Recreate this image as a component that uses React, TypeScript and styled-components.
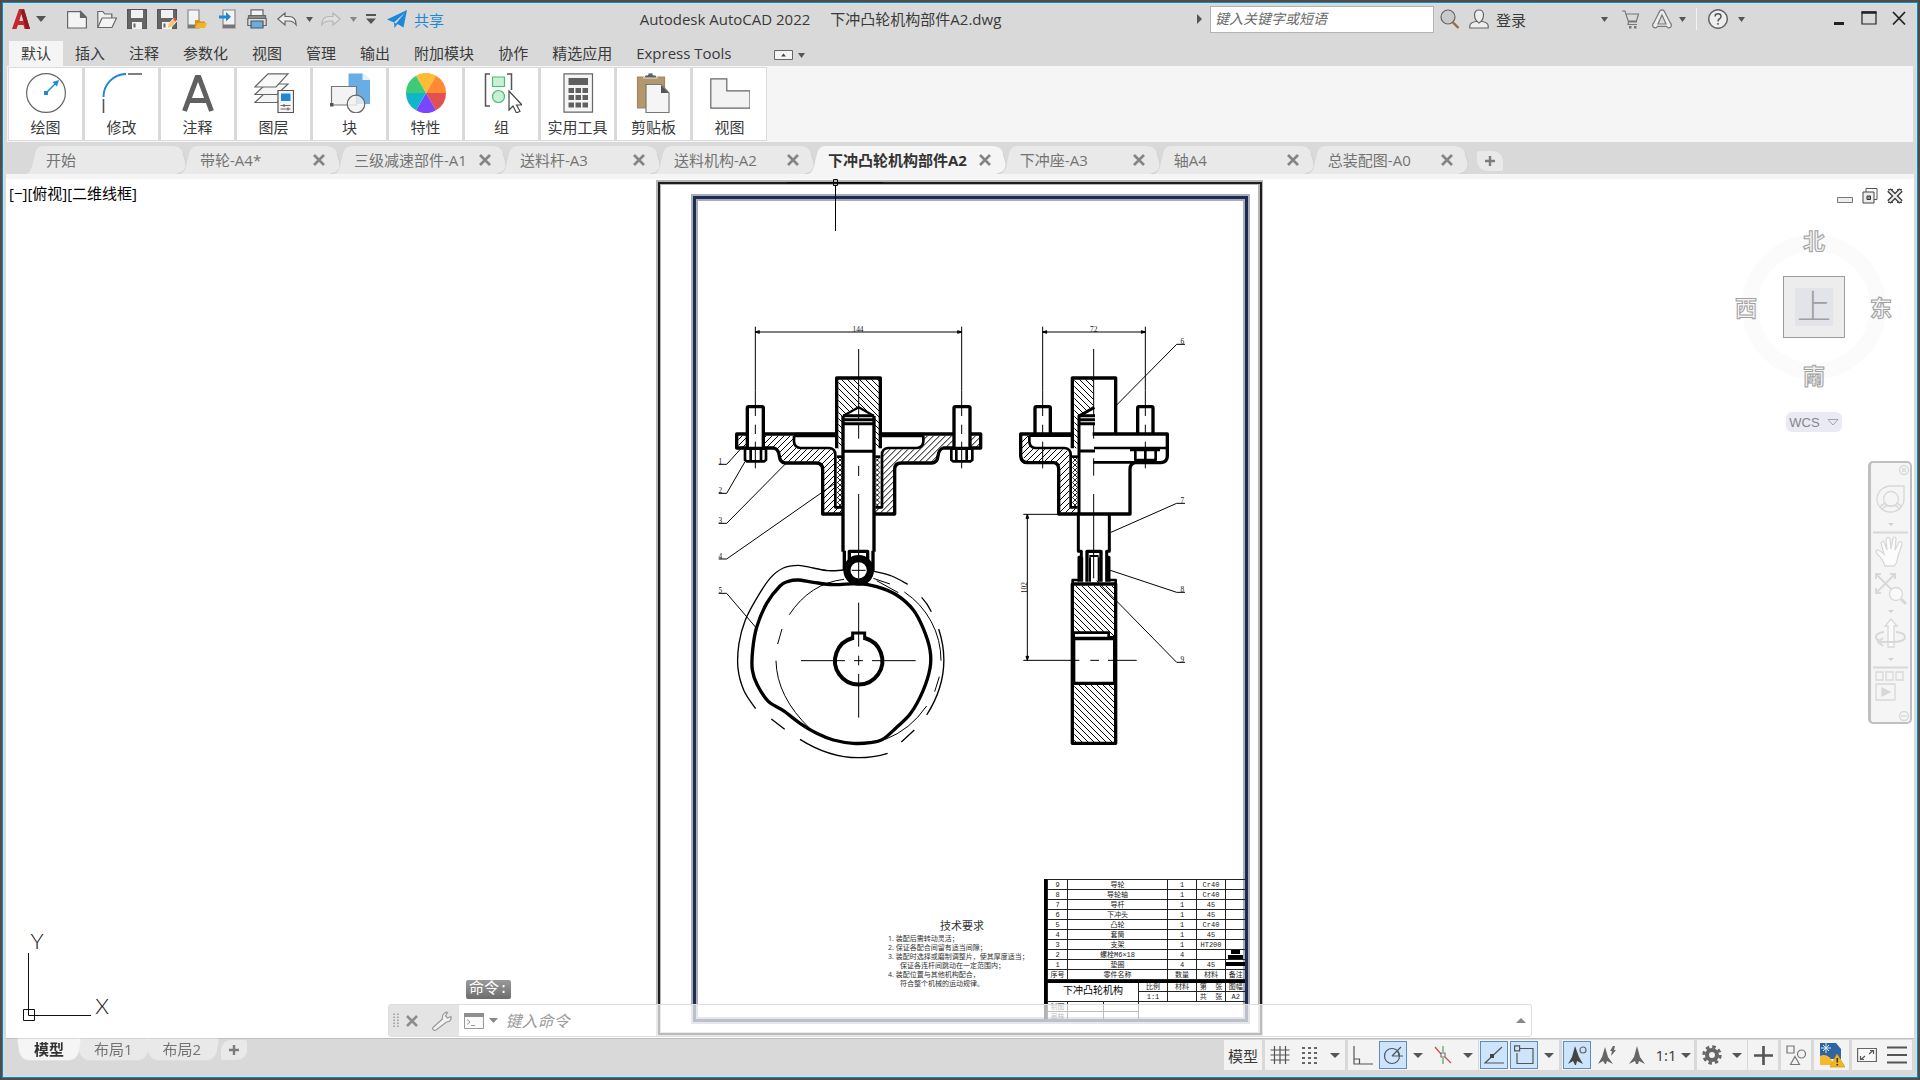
import React from 'react';
import styled, { createGlobalStyle, css } from 'styled-components';

const UI = `'Open Sans', 'Noto Sans CJK SC', sans-serif`;
const GREY = '#d9d9d9';
const LIGHT = '#f5f5f5';

const GlobalStyle = createGlobalStyle`
  *, *::before, *::after { box-sizing: border-box; }
  body { margin: 0; background: #4b4b4b; font-family: ${UI}; font-size: 15px; color: #3a3a3a; }
  button { font: inherit; color: inherit; background: none; border: 0; padding: 0; margin: 0; }
  svg { display: block; }
`;

/* ---------- window frame ---------- */
const Frame = styled.div`
  height: 100vh;
  border: 2px solid #4d4d4d;
  padding: 2px;
  background: ${GREY};
  box-shadow: inset 0 0 0 1px #2386ad, inset 0 0 0 2px #bce6f5;
  display: flex;
  flex-direction: column;
  overflow: hidden;
`;

const Row = styled.div<{ $gap?: number }>`
  display: flex;
  align-items: center;
  gap: ${(p) => p.$gap ?? 0}px;
`;

const IconButton = styled.button<{ $w?: number }>`
  display: flex;
  align-items: center;
  justify-content: center;
  width: ${(p) => p.$w ?? 20}px;
  height: 24px;
  flex: none;
`;

/* ---------- title bar ---------- */
const TitleBar = styled.header`
  height: 32px;
  flex: none;
  display: flex;
  align-items: center;
  justify-content: space-between;
  padding: 0 7px 2px 7px;
`;
const AppMenu = styled.button`
  display: flex;
  align-items: center;
  gap: 5px;
  margin-right: 21px;
`;
const Share = styled.button`
  display: flex;
  align-items: center;
  gap: 7px;
  color: #1e88d8;
  white-space: nowrap;
`;
const Title = styled.h1`
  margin: 0;
  font-size: 15px;
  font-weight: 400;
  line-height: 20px;
  display: flex;
  gap: 20px;
  white-space: nowrap;
`;
const Search = styled.input`
  width: 224px;
  height: 27px;
  margin: 0 6px 0 8px;
  border: 1px solid #b3b3b3;
  background: #fff;
  padding: 0 4px 2px;
  font: italic 14px ${UI};
  color: #555;
  &::placeholder { color: #6a6a6a; opacity: 1; }
`;
const SignIn = styled.button`
  display: flex;
  align-items: center;
  gap: 7px;
  margin: 0 75px 0 9px;
  white-space: nowrap;
`;
const Divider = styled.span`
  width: 1px;
  height: 22px;
  margin: 0 11px 0 10px;
  background: #f4f4f4;
`;
const WindowButtons = styled(Row)`
  margin-left: 84px;
`;

/* ---------- ribbon ---------- */
const RibbonTabs = styled.nav`
  height: 30px;
  flex: none;
  display: flex;
  align-items: flex-end;
  padding-left: 5px;
`;
const RibbonTab = styled.button<{ $active?: boolean }>`
  height: 25px;
  padding: 0 12px 2px;
  white-space: nowrap;
  line-height: 20px;
  background: ${(p) => (p.$active ? LIGHT : 'transparent')};
`;
const RibbonToggle = styled.button`
  display: flex;
  align-items: center;
  gap: 5px;
  height: 22px;
  margin-left: 30px;
`;
const Ribbon = styled.section`
  flex: none;
  height: 76px;
  margin: 0 3px;
  padding: 2px;
  background: ${LIGHT};
  display: flex;
`;
const Panels = styled.div`
  display: flex;
  gap: 3px;
  background: #d9d9d9;
  box-shadow: 0 0 0 1px #dcdcdc;
`;
const Panel = styled.button`
  width: 73px;
  height: 72px;
  background: #fff;
  display: flex;
  flex-direction: column;
  align-items: center;
  padding-top: 5px;
  gap: 4px;
  line-height: 20px;
  white-space: nowrap;
`;

/* ---------- drawing file tabs ---------- */
const FileTabs = styled.nav`
  flex: none;
  height: 32px;
  display: flex;
  align-items: flex-end;
  padding-left: 28px;
`;
const FileTabBox = styled.div<{ $active?: boolean }>`
  position: relative;
  z-index: ${(p) => (p.$active ? 1 : 0)};
  height: 28px;
  min-width: 154px;
  padding: 0 15px 0 14px;
  display: flex;
  align-items: center;
  justify-content: space-between;
  gap: 12px;
  color: ${(p) => (p.$active ? '#333' : '#737373')};
  fill: ${(p) => (p.$active ? LIGHT : '#e9e9e9')};
  font-weight: ${(p) => (p.$active ? 700 : 400)};
  white-space: nowrap;
  &::before {
    content: '';
    position: absolute;
    inset: 0 14px 0 14px;
    background: ${(p) => (p.$active ? LIGHT : '#e9e9e9')};
  }
  > button { position: relative; line-height: 20px; }
`;
const TabEdge = styled.svg<{ $side: 'left' | 'right' }>`
  position: absolute;
  top: 0;
  ${(p) => (p.$side === 'left' ? css`left: -6px;` : css`right: -1px;`)}
`;
const Strip = styled.div`
  flex: none;
  height: 5px;
  margin: 0 2px;
  background: ${LIGHT};
`;
const AddTab = styled.button<{ $flip?: boolean }>`
  width: 26px;
  height: 20px;
  display: flex;
  align-items: center;
  justify-content: center;
  background: #e9e9e9;
  border-radius: ${(p) => (p.$flip ? '10px 2px 10px 2px' : '2px 10px 2px 10px')};
  margin: ${(p) => (p.$flip ? '1px 0 0 5px' : '0 0 3px 9px')};
`;

/* ---------- canvas ---------- */
const Canvas = styled.main`
  flex: 1;
  min-height: 0;
  position: relative;
  margin: 0 2px;
  background: #fff;
  display: flex;
  justify-content: center;
  overflow: hidden;
`;
const ViewLabel = styled.div`
  position: absolute;
  left: 3px;
  top: 4px;
  color: #000;
  font-size: 15px;
  line-height: 20px;
`;
const Sheet = styled.div`
  position: relative;
  width: 610px;
  height: 859px;
  flex: none;
`;
const TitleBlock = styled.div`
  position: absolute;
  left: 389px;
  top: 700px;
  width: 201px;
  height: 140px;
  overflow: hidden;
  border-left: 3px solid #000;
  color: #222;
`;
const Grid = styled.table<{ $heavy?: boolean }>`
  width: 198px;
  table-layout: fixed;
  border-collapse: collapse;
  font-family: 'Liberation Mono', 'Noto Sans CJK SC', monospace;
  font-size: 7px;
  line-height: 8px;
  text-align: center;
  border-top: ${(p) => (p.$heavy ? 3 : 1)}px solid #000;
  tr { height: 10px; }
  td, th {
    padding: 0;
    font-weight: 400;
    border: 1px solid #222;
    white-space: pre;
    overflow: hidden;
  }
  td:last-child, th:last-child { border-right: 0; }
`;
const PartName = styled.td`
  font-size: 10px;
  line-height: 12px;
  color: #000;
`;
const Notes = styled.div`
  position: absolute;
  left: 233px;
  top: 739px;
  font-size: 7px;
  line-height: 9px;
  color: #333;
  white-space: nowrap;
  h2 { margin: 0 0 1px 52px; font-size: 11px; line-height: 15px; font-weight: 400; }
  p { margin: 0; }
`;
const NoteLine = styled.p<{ $indent?: boolean }>`
  && { padding-left: ${(p) => (p.$indent ? 12 : 0)}px; }
`;
const DocButtons = styled.div`
  position: absolute;
  right: 11px;
  top: 9px;
  display: flex;
  gap: 9px;
`;
const Compass = styled.div`
  position: absolute;
  right: 28px;
  top: 56px;
  width: 144px;
  height: 144px;
  border-radius: 50%;
  border: 16px solid #fbfbfb;
  display: flex;
  align-items: center;
  justify-content: center;
`;
const Cube = styled.button`
  width: 62px;
  height: 62px;
  flex: none;
  background: #ededed;
  border: 1px solid #9b9b9b;
  display: flex;
  align-items: center;
  justify-content: center;
  span {
    width: 38px;
    height: 38px;
    background: #e2e4e9;
    color: #9d9fa3;
    font-size: 34px;
    font-weight: 300;
    line-height: 36px;
  }
`;
const Heading = styled.span<{ $x: number; $y: number }>`
  position: absolute;
  left: ${(p) => p.$x}px;
  top: ${(p) => p.$y}px;
  width: 24px;
  text-align: center;
  font-size: 22px;
  line-height: 24px;
  color: #f4f4f4;
  font-weight: 700;
  -webkit-text-stroke: 1px #a0a0a0;
`;
const Wcs = styled.button`
  position: absolute;
  right: 72px;
  top: 233px;
  width: 56px;
  height: 20px;
  border-radius: 6px;
  background: #e9eaf4;
  color: #85868c;
  font: 13px 'Liberation Sans', sans-serif;
  display: flex;
  align-items: center;
  justify-content: center;
  gap: 7px;
`;
const NavBar = styled.aside`
  position: absolute;
  right: 2px;
  top: 282px;
  width: 44px;
  height: 263px;
  border: 2px solid #c0c0c0;
  border-left-width: 3px;
  border-radius: 5px;
  background: ${LIGHT};
`;
const Ucs = styled.svg`
  position: absolute;
  left: 14px;
  bottom: 14px;
  font-family: Lato, sans-serif;
  font-weight: 300;
`;
const Prompt = styled.div`
  position: absolute;
  left: 460px;
  bottom: 39px;
  height: 19px;
  padding: 0 3px;
  border-radius: 2px;
  background: linear-gradient(#9a9a9a, #6d6d6d);
  color: #fff;
  font: 15px 'Liberation Mono', 'Noto Sans CJK SC', monospace;
  line-height: 19px;
`;
const CommandLine = styled.div`
  position: absolute;
  left: 20%;
  right: 20%;
  bottom: 1px;
  height: 33px;
  border: 1px solid #dedede;
  border-radius: 3px;
  background: rgba(255, 255, 255, 0.7);
  display: flex;
  align-items: center;
`;
const CommandTools = styled.div`
  width: 70px;
  height: 31px;
  flex: none;
  background: #e4e4e4;
  display: flex;
  align-items: center;
  gap: 7px;
  padding-left: 4px;
`;
const CommandInput = styled.input`
  flex: 1;
  min-width: 0;
  margin-left: 6px;
  border: 0;
  background: transparent;
  font: italic 16px ${UI};
  &::placeholder { color: #9c9c9c; opacity: 1; }
`;

/* ---------- status bar ---------- */
const StatusBar = styled.footer`
  flex: none;
  height: 38px;
  margin: 0 2px;
  border-top: 1px solid #bdbdbd;
  display: flex;
  justify-content: space-between;
  align-items: flex-start;
`;
const LayoutTabs = styled.nav`
  display: flex;
  padding-left: 13px;
`;
const LayoutTab = styled.button<{ $active?: boolean }>`
  position: relative;
  isolation: isolate;
  z-index: ${(p) => (p.$active ? 1 : 0)};
  height: 22px;
  padding: 0 15px 2px;
  line-height: 20px;
  color: ${(p) => (p.$active ? '#333' : '#737373')};
  font-weight: ${(p) => (p.$active ? 700 : 400)};
  &::before {
    content: '';
    position: absolute;
    z-index: -1;
    inset: 0;
    background: ${(p) => (p.$active ? LIGHT : '#e9e9e9')};
    border-radius: 2px 2px 9px 9px;
    transform: perspective(20px) rotateX(-6deg);
  }
`;
const StatusTools = styled.div`
  display: flex;
  padding: 1px 2px 0 0;
`;
const Group = styled.div<{ $joined?: boolean }>`
  height: 30px;
  margin-left: ${(p) => (p.$joined ? 1 : 3)}px;
  background: #f3f3f3;
  display: flex;
  align-items: center;
`;
const Tool = styled.button<{ $w?: number; $on?: boolean }>`
  width: ${(p) => p.$w ?? 30}px;
  height: 30px;
  display: flex;
  align-items: center;
  justify-content: center;
  gap: 4px;
  white-space: nowrap;
  ${(p) =>
    p.$on &&
    css`
      width: 28px;
      height: 28px;
      margin: 0 1px;
      background: #cce5fd;
      border: 1px solid #5f8bb8;
    `}
`;

/* ---------- small glyph helpers ---------- */
const Caret = ({ w = 7, h = 5, c = '#555', up = false }: { w?: number; h?: number; c?: string; up?: boolean }) => (
  <svg width={w} height={h} viewBox="0 0 8 6" preserveAspectRatio="none">
    <path d={up ? 'M0 6h8L4 0z' : 'M0 0h8L4 6z'} fill={c} />
  </svg>
);
const Cross = ({ s = 12, w = 2.6, c = '#848484' }: { s?: number; w?: number; c?: string }) => (
  <svg width={s} height={s} viewBox="0 0 12 12">
    <path d="M1 1l10 10M11 1L1 11" stroke={c} strokeWidth={w} fill="none" />
  </svg>
);
const PlusMark = ({ s = 10, w = 2.4, c = '#7c7c7c' }: { s?: number; w?: number; c?: string }) => (
  <svg width={s} height={s} viewBox="0 0 10 10">
    <path d="M5 0v10M0 5h10" stroke={c} strokeWidth={w} />
  </svg>
);
const Glyph = ({ s = 20, children }: { s?: number; children: React.ReactNode }) => (
  <svg width={s} height={s} viewBox={`0 0 ${s} ${s}`} fill="none" stroke="#666" strokeWidth="1.2">
    {children}
  </svg>
);

const floppy = (
  <>
    <path d="M.5.5h19v19h-19z" fill="#666" stroke="#555" />
    <path d="M4 1h12v8H4z" fill="#f2f2f2" stroke="none" />
    <path d="M5 13h10v7H5z" fill="#f2f2f2" stroke="none" />
    <path d="M6.500 14.500h2v4h-2z" fill="#666" stroke="none" />
  </>
);

const quick: { label: string; art: React.ReactNode }[] = [
  { label: '新建', art: <><path d="M.6 2.600h13l5.800 5.800v10.600H.6z" fill="#f4f4f4" /><path d="M13.500 2.500v6h6z" fill="#666" /></> },
  { label: '打开', art: <><path d="M.8 18V2.500h5l2 2.500h7v4" fill="#f0f0f0" /><path d="M.8 18.500L5 9h14.500L15 18.500z" fill="#f4f4f4" /></> },
  { label: '保存', art: floppy },
  { label: '另存为', art: <>{floppy}<path d="M10 19.500l1-4 6-6.500 3 3-6 6.500z" fill="#f6c66b" stroke="#fff" strokeWidth=".8" /><path d="M16 10l2-1.500L20 11l-1.500 1.500z" fill="#e34b4b" stroke="none" /></> },
  { label: '从云端打开', art: <><path d="M1 1h11v18H1z" fill="#f3f3f3" stroke="#888" /><path d="M1 15.500h11V19H1z" fill="#777" stroke="none" /><path d="M8 19v-8h4l1.500 1.500H18V19z" fill="#d99412" stroke="none" /><path d="M8 19l2.500-5H20l-2 5z" fill="#f4b12c" stroke="none" /></> },
  { label: '保存到云端', art: <><path d="M6 1h12v18H6z" fill="#f3f3f3" stroke="#888" /><path d="M6 15.500h12V19H6z" fill="#777" stroke="none" /><path d="M2 6.500h7V3l5 4.800-5 4.700V9.500H2z" fill="#1e88d8" stroke="none" /></> },
  { label: '打印', art: <><path d="M4 .8h12V8H4z" fill="#f3f3f3" /><path d="M1.500 6.500h17V14h-17z" fill="#8a8a8a" /><path d="M.8 9.500h18.400v7H.8z" fill="#ddd" /><path d="M4 12h12v7H4z" fill="#66aee2" stroke="#555" /></> },
];

/* ---------- ribbon artwork ---------- */
const pie = ['#ffbb33', '#ff8a33', '#e35050', '#7a45ff', '#10b5c9', '#3ecb78'];
const slice = (i: number) => {
  const a = ((i * 60 - 120) * Math.PI) / 180;
  const b = ((i * 60 - 60) * Math.PI) / 180;
  const p = (t: number) => `${20 + 20 * Math.cos(t)} ${20 + 20 * Math.sin(t)}`;
  return `M20 20L${p(a)}A20 20 0 0 1 ${p(b)}z`;
};

const panels: { label: string; art: React.ReactNode }[] = [
  { label: '绘图', art: <><circle cx="20" cy="20" r="19.400" stroke="#666" /><path d="M20 20l11-11" stroke="#1e88d8" strokeWidth="1.500" /><path d="M33 7l-2 6.500L26.500 9z" fill="#1e88d8" stroke="none" /><path d="M18 18h4v4h-4z" fill="#1e88d8" stroke="none" /></> },
  { label: '修改', art: <><path d="M1.500 24A23 23 0 0 1 24 .900" stroke="#1e88d8" strokeWidth="2" /><path d="M1.500 26v14M26 1h14" stroke="#555" strokeWidth="1.600" /></> },
  { label: '注释', art: <path d="M6.500 38L19 4.500h2L33.500 38M11.500 27.500h17" stroke="#606060" strokeWidth="5" /> },
  { label: '图层', art: <><path d="M.8 29.500L12 19h22L23 29.500z" fill="#f6f6f6" /><path d="M.8 21.500L12 11h22L23 21.500z" fill="#f6f6f6" /><path d="M.8 14L14 .800h20L22 14z" fill="#f8f8f8" /><path d="M24 17.500h15.500v22H24z" fill="#f6f6f6" stroke="#555" /><path d="M27 20.500h9.500v7.500H27z" fill="#1e88d8" stroke="none" /><path d="M26.500 32.500h10M26.500 36h10M30 31v3M34 34.500v3" /></> },
  { label: '块', art: <><path d="M18.500.500h14L40 7v24H18.500z" fill="#68aee4" stroke="none" /><path d="M32.500.500V7H40z" fill="#eaf3fb" stroke="none" /><path d="M1.500 13.500h25v18.500h-25z" fill="#f3f3f3" stroke="#777" /><circle cx="26" cy="31" r="8.800" fill="#f3f3f3" fillOpacity=".8" /><path d="M0 30h3.500v3.500H0z" fill="#555" stroke="none" /></> },
  { label: '特性', art: <g stroke="none">{pie.map((c, i) => <path key={c} d={slice(i)} fill={c} />)}</g> },
  { label: '组', art: <><path d="M8 1H3.500v32H8M25 1h4.500v16" stroke="#555" strokeWidth="1.500" /><path d="M10.500 4h12v9.500h-12z" fill="#c8f0d4" stroke="#49bd71" /><circle cx="16.500" cy="23.500" r="6" fill="#c8f0d4" stroke="#49bd71" /><path d="M27 18v19l4-4 3.500 7 3.500-1.800-3.500-6.200H40z" fill="#fff" stroke="#444" /></> },
  { label: '实用工具', art: <><path d="M6 .800h28.500v38.400H6z" fill="#f5f5f5" /><path d="M10.500 5h19.500v7H10.500z" fill="#606060" stroke="none" />{[15, 22, 29.5].map((y) => [10.5, 17.5, 24.5].map((x) => <path key={`${x}-${y}`} d={`M${x} ${y}h5.500v5h-5.500z`} fill="#606060" stroke="none" />))}</> },
  { label: '剪贴板', art: <><path d="M3.500 4h27v31h-27z" fill="#b2986c" stroke="#a08861" /><path d="M9.500 5h14l-2-3h-2.500V0h-5v2H11.500z" fill="#606060" stroke="#fff" strokeWidth=".8" /><path d="M12 11.500h15.500l7.500 8.500v19.500H12z" fill="#f5f5f5" stroke="#777" /><path d="M27 12v8h7.500z" fill="#555" stroke="none" /></> },
  { label: '视图', art: <path d="M.8 5.800h16v12H40v17.400H.8z" fill="#f3f3f3" stroke="#666" /> },
];

/* ---------- engineering drawing ---------- */
type Pt = [number, number];
/** Catmull-Rom spline through the points, written as cubic Béziers. */
const spline = (pts: Pt[], closed = false) => {
  const n = pts.length;
  const at = (i: number): Pt => (closed ? pts[(i + n) % n] : pts[Math.max(0, Math.min(n - 1, i))]);
  let d = `M${pts[0].join(' ')}`;
  for (let i = 0; i < (closed ? n : n - 1); i++) {
    const [a, b, c, e] = [at(i - 1), at(i), at(i + 1), at(i + 2)];
    d += `C${b[0] + (c[0] - a[0]) / 6} ${b[1] + (c[1] - a[1]) / 6} ${c[0] - (e[0] - b[0]) / 6} ${c[1] - (e[1] - b[1]) / 6} ${c[0]} ${c[1]}`;
  }
  return closed ? d + 'z' : d;
};

const camProfile: Pt[] = [[295, 120], [340, 127], [400, 134], [476, 131], [530, 140], [590, 165], [640, 210], [670, 266], [690, 330], [690, 385], [668, 455], [632, 520], [590, 562], [548, 598], [510, 608], [460, 610], [400, 600], [350, 580], [300, 550], [250, 512], [205, 484], [172, 435], [157, 390], [158, 330], [170, 262], [200, 190], [240, 138], [265, 124]];

type Callout = [string, number, number, number];
const leftCallouts: Callout[] = [['1', 463, 130, 408], ['2', 550, 135, 455], ['3', 640, 258, 460], ['4', 747, 405, 520], ['5', 850, 168, 953]];
const rightCallouts: Callout[] = [['6', 103, 410, 285], ['7', 580, 393, 667], ['8', 847, 388, 780], ['9', 1057, 350, 812]];

const Leaders = ({ items, from, to, textX }: { items: Callout[]; from: number; to: number; textX: number }) => (
  <>
    {items.map(([n, y, tx, ty]) => (
      <g key={n}>
        <path d={`M${from} ${y}H${to}L${tx} ${ty}`} strokeWidth="3" />
        <text x={textX} y={y - 1} textAnchor="middle" fill="#111" stroke="none">{n}</text>
      </g>
    ))}
  </>
);

const HalfFlange = ({ hatch }: { hatch: string }) => (
  <>
    <path d="M115 377H280L285 405 300 418H395L403 432V592L428 597V608H372V475L355 455H255L240 440 232 418 115 414z" fill={`url(#${hatch})`} stroke="none" />
    <path d="M410 372H110V414H222Q236 418 238 438T256 459H348Q368 459 368 478V612H428" />
    <path d="M282 375H410" strokeWidth="13" />
    <path d="M282 378V395Q284 414 302 414H388Q406 416 406 434V592H426" strokeWidth="8" />
    <path d="M142 415V294Q142 290 146 290H186Q190 290 190 294V415z" fill="#fff" />
    <path d="M135 416H198V450L192 454H141L135 450zM152 420V450M183 420V450" fill="#fff" strokeWidth="8" />
    <path d="M411 440H426V590H411z" fill="url(#crosshatch)" stroke="none" />
    <path d="M411 440H426" strokeWidth="8" />
  </>
);

const SheetArt = () => (
  <svg width="610" height="859" viewBox="655 179 610 859" fill="none" stroke="#000">
    <defs>
      <pattern id="hatchA" width="18" height="18" patternUnits="userSpaceOnUse">
        <path d="M-2 2l4-4M0 18L18 0M16 20l4-4" stroke="#000" strokeWidth="3" />
      </pattern>
      <pattern id="hatchB" width="18" height="18" patternUnits="userSpaceOnUse">
        <path d="M-2 16l4 4M0 0l18 18M16-2l4 4" stroke="#000" strokeWidth="3" />
      </pattern>
      <pattern id="crosshatch" width="15" height="15" patternUnits="userSpaceOnUse">
        <path d="M0 0l15 15M15 0L0 15" stroke="#000" strokeWidth="2.600" />
      </pattern>
    </defs>

    {/* paper edge and border */}
    <path d="M658.500 182.500h602v852h-602z" stroke="#b5b5b5" strokeWidth="5" />
    <path d="M659 183h602v851h-602z" stroke="#1c1c1c" strokeWidth="2" />
    <path d="M694.500 197.500h552v823h-552z" stroke="#a8adb9" strokeWidth="7" />
    <path d="M694.500 197.500h552v823h-552z" stroke="#1d2c50" strokeWidth="3" />

    {/* cursor */}
    <path d="M787 182.500h96M835.500 186v45" />
    <path d="M833.500 179.500h4v6h-4z" />

    {/* front view */}
    <g transform="translate(700 310) scale(.3333333)" strokeWidth="10" strokeLinejoin="round" fontSize="22" fontFamily="Liberation Serif, serif">
      <g strokeWidth="3" fill="#222">
        <path d="M166 50V242M785 50V242M166 66H785" />
        <path d="M166 66l12-4v8zM785 66l-12-4v8z" />
      </g>
      <HalfFlange hatch="hatchA" />
      <g transform="translate(952 0) scale(-1 1)"><HalfFlange hatch="hatchB" /></g>
      <path d="M410 415V204H541V415" fill="#fff" />
      <path d="M415 208H537V415H525V325L476 292 428 320V415H415z" fill="url(#hatchB)" stroke="none" />
      <path d="M430 725V318L476 292 522 318V725z" fill="#fff" stroke="none" />
      <path d="M429 725V318M522 318V725" />
      <path d="M429 318L476 292 522 318" strokeWidth="7" />
      <path d="M429 317H522M429 329H522M429 341H522M429 424H522" strokeWidth="9" />
      <path d="M433 722V782M519 722V782M448 760V724H503V760" />
      <circle cx="476" cy="781" r="41" strokeWidth="10" />
      <circle cx="476" cy="781" r="31" strokeWidth="13" fill="#fff" />
      <path d="M476 117V330M476 345V386M476 468V498M476 552V805M455 781H497M166 242V318M166 344V372M166 395V475M785 242V318M785 344V372M785 395V475" strokeWidth="3" />
      <text x="474" y="65" textAnchor="middle" fill="#111" stroke="none">144</text>
      <Leaders items={leftCallouts} from={56} to={80} textX={61} />
    </g>

    {/* cam */}
    <g transform="translate(700 540) scale(.3333333)" strokeWidth="3">
      <path d={spline(camProfile, true)} strokeWidth="10" />
      <path d={spline([[167, 506], [132, 452], [114, 385], [117, 310], [136, 240], [170, 175], [210, 115], [250, 84], [295, 76], [340, 84], [385, 92], [432, 90]])} strokeWidth="4" />
      <path d={spline([[522, 94], [575, 108], [623, 133]])} strokeWidth="4" />
      <path d="M665 172Q682 190 694 215M716 267Q760 400 680 525M643 570L604 606M563 640Q430 680 300 598M254 568L214 537" strokeWidth="4" />
      <path d="M613 156A247 247 0 0 1 723 362M718 410L704 455M680 498Q630 570 556 598M228 362Q230 470 330 566M246 267L233 312M268 224Q330 130 432 118M520 115L570 132M530 122L595 158" />
      <path d="M458 294A71 71 0 1 0 494 294" strokeWidth="12" />
      <path d="M458 300V279H494V300" strokeWidth="9" />
      <path d="M476 188V320M476 347V376M476 402V533M303 362H435M462 362H489M516 362H647" />
    </g>

    {/* side view */}
    <g transform="translate(980 310) scale(.3333333)" strokeWidth="10" strokeLinejoin="round" fontSize="22" fontFamily="Liberation Serif, serif">
      <g strokeWidth="3">
        <path d="M188 50V242M496 50V242M188 66H496M142 613V1051M130 613H236" />
        <path d="M188 66l12-4v8zM496 66l-12-4v8zM142 613l-4 12h8zM142 1051l-4-12h8z" fill="#000" />
      </g>
      <path d="M165 370V294Q165 290 169 290H207Q211 290 211 294V370M473 370V294Q473 290 477 290H515Q519 290 519 294V370" />
      <path d="M126 377H146V400L163 418H260L268 432V592L293 598V608H240V475L227 455H140L126 438z" fill="url(#hatchA)" stroke="none" />
      <path d="M277 372H122V438Q124 458 142 458H222Q236 460 236 478V612H450V478Q450 460 466 458H543Q562 456 562 438V372H338" />
      <path d="M148 375H277" strokeWidth="12" />
      <path d="M148 378V395Q150 414 166 414H254Q272 416 272 434V592H293" strokeWidth="8" />
      <path d="M342 414H562M340 457H466" strokeWidth="8" />
      <path d="M466 424V450H527V424M496 422V452M450 420H540" strokeWidth="8" />
      <path d="M277 415V204H407V370" />
      <path d="M283 208H341V292L297 315V415H283z" fill="url(#hatchB)" stroke="none" />
      <path d="M297 612V318L343 292M297 317H345M297 329H345M297 341H345M297 423H345" strokeWidth="9" />
      <path d="M277 440H293V590H277z" fill="url(#crosshatch)" stroke="none" />
      <path d="M275 440H295" strokeWidth="8" />
      <path d="M295 612V724H304V742H297V815M388 612V724H380V742H387V815M305 742V815M380 742V815" strokeWidth="9" />
      <path d="M321 815V724H363V815" />
      <path d="M328 738H356M330 815V742M356 815V742" strokeWidth="6" />
      <path d="M278 822V810H297M388 810H407V822" strokeWidth="8" />
      <path d="M277 822H407V1300H277z" />
      <path d="M283 828H403V980H388V966H283z" fill="url(#hatchB)" stroke="none" />
      <path d="M281 968H386V984H281zM386 982H403" fill="#fff" strokeWidth="8" />
      <path d="M281 986H404V1120H281z" fill="#fff" />
      <path d="M283 1125H403V1296H283z" fill="url(#hatchB)" stroke="none" />
      <path d="M341 117V318M341 344V386M341 445V497M341 552V805M188 290V318M188 344V372M188 395V475M496 242V318M496 344V372M496 395V475M188 242V290M130 1051H298M331 1051H357M384 1051H470" strokeWidth="3" />
      <g fill="#111" stroke="none">
        <text x="341" y="65" textAnchor="middle">72</text>
        <text transform="translate(140 833) rotate(-90)" textAnchor="middle">102</text>
      </g>
      <Leaders items={rightCallouts} from={615} to={590} textX={607} />
    </g>

    {/* projection marks in the remarks column */}
    <path d="M1231 950h9v4h-9zM1228 955h15v4h-15zM1225 962h20v4h-20z" fill="#000" stroke="none" />
  </svg>
);

const parts: [string, string, string, string][] = [
  ['9', '导轮', '1', 'Cr40'],
  ['8', '导轮轴', '1', 'Cr40'],
  ['7', '导杆', '1', '45'],
  ['6', '下冲头', '1', '45'],
  ['5', '凸轮', '1', 'Cr40'],
  ['4', '套筒', '1', '45'],
  ['3', '支架', '1', 'HT200'],
  ['2', '螺栓M6×18', '4', ''],
  ['1', '垫圈', '4', '45'],
];

const Cols = ({ w }: { w: number[] }) => (
  <colgroup>{w.map((v, i) => <col key={i} width={v} />)}</colgroup>
);

const Bill = () => (
  <TitleBlock>
    <Grid>
      <Cols w={[20, 100, 29, 29, 20]} />
      <tbody>
        {parts.map((r) => (
          <tr key={r[0]}>{r.map((c, i) => <td key={i}>{c}</td>)}<td /></tr>
        ))}
        <tr><th>序号</th><th>零件名称</th><th>数量</th><th>材料</th><th>备注</th></tr>
      </tbody>
    </Grid>
    <Grid $heavy>
      <Cols w={[20, 36, 35, 29, 29, 29, 20]} />
      <tbody>
        <tr><PartName colSpan={3} rowSpan={2}>下冲凸轮机构</PartName><td>比例</td><td>材料</td><td>第  张</td><td>图幅</td></tr>
        <tr><td>1:1</td><td /><td>共  张</td><td>A2</td></tr>
        <tr><td>制图</td><td /><td /><td colSpan={4} rowSpan={2} /></tr>
        <tr><td>审核</td><td /><td /></tr>
      </tbody>
    </Grid>
  </TitleBlock>
);

/* ---------- file tabs ---------- */
const files = ['开始', '带轮-A4*', '三级减速部件-A1', '送料杆-A3', '送料机构-A2', '下冲凸轮机构部件A2', '下冲座-A3', '轴A4', '总装配图-A0'];

const FileTab = ({ name, active, closable }: { name: string; active: boolean; closable: boolean }) => (
  <FileTabBox $active={active}>
    <TabEdge $side="left" width="20" height="28" viewBox="0 0 20 28"><path d="M0 28C7 27 7 12 10 5Q12 0 18 0h2v28z" /></TabEdge>
    <TabEdge $side="right" width="15" height="28" viewBox="0 0 15 28">
      <path d="M0 0Q9 0 11 7L14 17Q16 27 3 28H0z" />
      <path d="M11 7L14 17Q15 26 5 28" fill="none" stroke="#d0d0d0" />
    </TabEdge>
    <button type="button">{name}</button>
    {closable && <button type="button" aria-label={`关闭 ${name}`}><Cross /></button>}
  </FileTabBox>
);

/* ---------- application ---------- */
export default function App() {
  return (
    <Frame>
      <GlobalStyle />
      <TitleBar>
        <Row>
          <AppMenu type="button" aria-label="应用程序菜单">
            <svg width="20" height="22" viewBox="0 0 20 22">
              <path d="M1 21L8 1h5l6 20h-5.500l-1-4H7l-1.500 4z" fill="#c4272e" />
              <path d="M8.300 13l2-7 2 7z" fill={GREY} />
              <path d="M13 1l6 20h-4L10 3z" fill="#8e1a22" />
            </svg>
            <Caret w={10} h={6} />
          </AppMenu>
          <Row $gap={10}>
            {quick.map((q) => (
              <IconButton key={q.label} type="button" aria-label={q.label}><Glyph>{q.art}</Glyph></IconButton>
            ))}
            <Row $gap={7}>
              <IconButton type="button" aria-label="放弃"><Glyph><path d="M.8 10L8 4v3.500h4q7 0 7.200 8.500-3-4-7.200-4H8V16z" fill="#eee" /></Glyph></IconButton>
              <IconButton type="button" $w={10} aria-label="放弃列表"><Caret /></IconButton>
              <IconButton type="button" aria-label="重做"><Glyph><path d="M19.200 10L12 4v3.500H8Q1 7.500.8 16q3-4 7.200-4h4v4z" fill="#e0e0e0" stroke="#b5b5b5" /></Glyph></IconButton>
              <IconButton type="button" $w={10} aria-label="重做列表"><Caret c="#888" /></IconButton>
              <IconButton type="button" $w={12} aria-label="自定义快速访问工具栏">
                <svg width="12" height="11" viewBox="0 0 12 11"><path d="M1 0h10v2H1zM1 4.500h10L6 10z" fill="#555" /></svg>
              </IconButton>
            </Row>
            <Share type="button">
              <Glyph><path d="M0 10.500L20 1l-3.500 17.500-6-3.500-3 4-.5-5.500z" fill="#1e88d8" stroke="none" /><path d="M7 13.500L18 3.500 9 14.500z" fill={GREY} stroke="none" /></Glyph>
              共享
            </Share>
          </Row>
        </Row>
        <Title><span>Autodesk AutoCAD 2022</span><span>下冲凸轮机构部件A2.dwg</span></Title>
        <Row>
          <svg width="5" height="10" viewBox="0 0 5 10"><path d="M0 0l5 5-5 5z" fill="#555" /></svg>
          <Search aria-label="搜索" placeholder="键入关键字或短语" />
          <IconButton type="button" aria-label="搜索">
            <Glyph><circle cx="8" cy="8" r="7" fill="#c9c9c9" /><path d="M12.500 13l6 6" stroke="#96694a" strokeWidth="2.400" /></Glyph>
          </IconButton>
          <SignIn type="button">
            <Glyph><path d="M.8 19v-2q0-3.500 6.200-4.500h6q6.200 1 6.200 4.500v2z" fill="#eee" /><path d="M5.500 6q0-5 4.500-5t4.500 5-4.500 8Q5.500 11 5.500 6z" fill="#eee" /></Glyph>
            登录
          </SignIn>
          <Caret />
          <IconButton type="button" aria-label="应用商店" $w={44}>
            <Glyph><path d="M2 2h3l3.500 11H17M6 5h12.500l-2 7H8M8.500 13l-.5 2.500h9" stroke="#777" /><path d="M9 17h2.500v2.500H9zM14 17h2.500v2.500H14z" fill="#777" stroke="none" /></Glyph>
          </IconButton>
          <Row $gap={7}>
            <IconButton type="button" aria-label="Autodesk 应用">
              <Glyph><path d="M10 .800q2.200 0 2.800 2.500L18 13.500q2.500 2.500.5 4.800-2.500 1.500-4-1H5.500q-1.500 2.500-4 1-2-2.300.5-4.800L7.200 3.300Q7.800.800 10 .800z" fill="#eee" stroke="#777" /><path d="M10 6l4 9H6z" fill={GREY} stroke="#777" /></Glyph>
            </IconButton>
            <Caret />
          </Row>
          <Divider />
          <Row $gap={10}>
            <IconButton type="button" aria-label="帮助">
              <Glyph><circle cx="10" cy="10" r="9.300" fill="#eee" strokeWidth="1.500" /><path d="M7 7.500Q7 4.800 10 4.800t3 2.700q0 1.500-1.700 2.500-1.300.8-1.300 2.500M10 14v1.800" stroke="#555" strokeWidth="1.500" /></Glyph>
            </IconButton>
            <Caret />
          </Row>
          <WindowButtons $gap={10}>
            <IconButton type="button" aria-label="最小化"><Glyph><path d="M5 14.500h10" stroke="#222" strokeWidth="3" /></Glyph></IconButton>
            <IconButton type="button" aria-label="最大化"><Glyph><path d="M3 3h14v12H3z" stroke="#222" /><path d="M2.500 3.500h15" stroke="#222" strokeWidth="2.500" /></Glyph></IconButton>
            <IconButton type="button" aria-label="关闭"><Glyph><path d="M4 3l12 12.500M16 3L4 15.500" stroke="#222" strokeWidth="1.800" /></Glyph></IconButton>
          </WindowButtons>
        </Row>
      </TitleBar>

      <RibbonTabs>
        {['默认', '插入', '注释', '参数化', '视图', '管理', '输出', '附加模块', '协作', '精选应用', 'Express Tools'].map((t, i) => (
          <RibbonTab key={t} type="button" $active={i === 0}>{t}</RibbonTab>
        ))}
        <RibbonToggle type="button" aria-label="最小化功能区">
          <svg width="19" height="10" viewBox="0 0 19 10"><path d="M.5.500h18v9H.5z" fill="#f4f4f4" stroke="#666" /><path d="M7 6.500h5L9.500 3.500z" fill="#444" /></svg>
          <Caret />
        </RibbonToggle>
      </RibbonTabs>

      <Ribbon>
        <Panels>
          {panels.map((p) => (
            <Panel key={p.label} type="button"><Glyph s={40}>{p.art}</Glyph>{p.label}</Panel>
          ))}
        </Panels>
      </Ribbon>

      <FileTabs>
        {files.map((f, i) => <FileTab key={f} name={f} active={i === 5} closable={i > 0} />)}
        <AddTab type="button" aria-label="新图形"><PlusMark /></AddTab>
      </FileTabs>
      <Strip />

      <Canvas>
        <Sheet>
          <SheetArt />
          <Bill />
          <Notes>
            <h2>技术要求</h2>
            <NoteLine>1. 装配后需转动灵活；</NoteLine>
            <NoteLine>2. 保证各配合间留有适当间隙；</NoteLine>
            <NoteLine>3. 装配时选择或磨制调整片，使其厚度适当；</NoteLine>
            <NoteLine $indent>保证各连杆间跳动在一定范围内；</NoteLine>
            <NoteLine>4. 装配位置与其他机构配合，</NoteLine>
            <NoteLine $indent>符合整个机械的运动规律。</NoteLine>
          </Notes>
        </Sheet>
        <ViewLabel>[−][俯视][二维线框]</ViewLabel>
        <DocButtons>
          <svg width="16" height="16" viewBox="0 0 16 16"><path d="M.5 9.500h15v5H.5z" fill="#eee" stroke="#777" /></svg>
          <svg width="16" height="16" viewBox="0 0 16 16"><path d="M4 .500h11v11H4z" fill="#fff" stroke="#555" /><path d="M1 4h11v11H1z" fill="#eee" stroke="#444" /><path d="M5 8h3.500v3.500H5z" fill="#999" stroke="#333" /></svg>
          <svg width="16" height="16" viewBox="0 0 16 16"><path d="M2 2l12 12M14 2L2 14" stroke="#444" strokeWidth="5" /><path d="M2.500 2.500l11 11M13.500 2.500l-11 11" stroke="#f0f0f0" strokeWidth="2" /><path d="M1 1.500h5M10 1.500h5M1 14.500h5M10 14.500h5" stroke="#444" /></svg>
        </DocButtons>
        <Compass>
          <Cube type="button"><span>上</span></Cube>
          <Heading $x={44} $y={-23}>北</Heading>
          <Heading $x={44} $y={112}>南</Heading>
          <Heading $x={-24} $y={44}>西</Heading>
          <Heading $x={111} $y={44}>东</Heading>
        </Compass>
        <Wcs type="button">WCS <svg width="12" height="7" viewBox="0 0 12 7"><path d="M1 .500h10L6 6z" fill="none" stroke="#a3a4ac" /></svg></Wcs>
        <NavBar aria-label="导航栏">
          <svg width="39" height="259" viewBox="0 0 39 259" fill="none" stroke="#d6d9d6" strokeWidth="1.300">
            <circle cx="33" cy="7" r="4.500" /><path d="M31 5l4 4M35 5l-4 4" />
            <path d="M6 36a14 13 0 0 1 14-13h13v13a13.500 13 0 0 1-27 0zM9 44q4-4 6-4M31 44q-4-4-6-4" /><circle cx="20" cy="36" r="7.500" /><path d="M11 47q3-6 9-4 6-2 9 4" />
            <path d="M2 69.500h35M2 204.500h35" strokeWidth="2" />
            <path d="M17 60h6l-3 3zM17 147h6l-3 3zM17 195h6l-3 3z" fill="#cfd2cf" stroke="none" />
            <path d="M14 103Q12 96 6 91q-2-4 1-4 3 1 6 4L10 80q1-3 3-1l3 8-1-11q2-3 4 0l1 10 2-11q3-2 3 1l-1 11 4-8q3-1 3 2-2 7-4 12-1 8-4 10z" fill="#fcfcfc" />
            <path d="M6 112l17 17M23 112L6 129M5 116v-5h5M19 111h5v5M5 125v5h5" strokeWidth="2" /><circle cx="25" cy="131" r="6.500" fill="#fafafa" /><path d="M30 136l5 5" strokeWidth="3" />
            <path d="M17 184v-21h-3l6-7 6 7h-3v21z" fill="#fafafa" /><path d="M25 169q9 1 9 5 0 5-14 5H9M13 169q-8 1-8 5 0 3 5 4M12 175l-5 4 5 4" strokeWidth="2" />
            <path d="M5 209h7v8H5zM15 209h7v8h-7zM25 209h7v8h-7zM5 221h19v16H5z" /><path d="M11 225l8 4-8 4z" fill="#d6d9d6" />
            <circle cx="33" cy="253" r="4.500" /><path d="M30 253h6" />
          </svg>
        </NavBar>
        <Ucs width="95" height="96" viewBox="20 928 95 96" fill="none" stroke="#111">
          <path d="M28.500 953v62.500H91M23.500 1009.500h11v11h-11z" />
          <g fill="#111" stroke="none" fontSize="22">
            <text x="37" y="949" textAnchor="middle">Y</text>
            <text x="102" y="1014" textAnchor="middle">X</text>
          </g>
        </Ucs>
        <Prompt>命令:</Prompt>
        <CommandLine>
          <CommandTools>
            <svg width="8" height="20" viewBox="0 0 8 20"><path d="M1.500 0v20M6.500 0v20" stroke="#999" strokeWidth="2" strokeDasharray="2 2" /></svg>
            <button type="button" aria-label="关闭命令行"><Cross c="#8c8c8c" /></button>
            <IconButton type="button" aria-label="自定义" $w={34}>
              <Glyph><path d="M1 16.500L10.500 8Q9.500 3.500 14 1.200l1.500.3L13.500 5l2 2 3.500-1.500q.8 5-4.500 5.500L4 19q-2 1-3-.5-.8-1 0-2z" fill="#f3f3f3" stroke="#999" /></Glyph>
            </IconButton>
          </CommandTools>
          <Row>
            <IconButton type="button" aria-label="最近使用的命令" $w={30}>
              <svg width="20" height="16" viewBox="0 0 20 16" fill="none" stroke="#999"><path d="M.5.500h19v15H.5z" fill="#fafafa" /><path d="M0 2h20" strokeWidth="4" stroke="#8f8f8f" /><path d="M3 6.500l3 2.500-3 2.500M7 12.500h4" /></svg>
            </IconButton>
            <Caret w={9} h={5} c="#888" />
          </Row>
          <CommandInput aria-label="命令" placeholder="键入命令" />
          <IconButton type="button" aria-label="历史记录"><Caret w={10} h={5} c="#888" up /></IconButton>
        </CommandLine>
      </Canvas>

      <StatusBar>
        <LayoutTabs>
          <LayoutTab type="button" $active>模型</LayoutTab>
          <LayoutTab type="button">布局1</LayoutTab>
          <LayoutTab type="button">布局2</LayoutTab>
          <AddTab type="button" $flip aria-label="新建布局"><PlusMark /></AddTab>
        </LayoutTabs>
        <StatusTools>
          <Group><Tool type="button" $w={38}>模型</Tool></Group>
          <Group>
            <Tool type="button" aria-label="栅格"><Glyph><path d="M4.500 1v18M10 1v18M15.500 1v18M.5 5h19M.5 10h19M.5 15h19" stroke="#555" /></Glyph></Tool>
            <Tool type="button" aria-label="捕捉"><Glyph><g fill="#666" stroke="none">{[2, 7, 12, 17].map((y) => [2, 8, 14].map((x) => <path key={`${x}-${y}`} d={`M${x} ${y}h3v2h-3z`} />))}</g></Glyph></Tool>
            <Tool type="button" $w={20} aria-label="捕捉选项"><Caret w={10} h={5} /></Tool>
          </Group>
          <Group>
            <Tool type="button" aria-label="正交"><Glyph><path d="M1 1v18h19M1 14h5.500v5" stroke="#555" /></Glyph></Tool>
            <Tool type="button" $on aria-label="极轴追踪"><Glyph><circle cx="9" cy="11" r="7.500" stroke="#555" /><path d="M9 11h11M9 11l9-9M14 6q2.500 2 2 5" stroke="#555" /></Glyph></Tool>
            <Tool type="button" $w={20} aria-label="极轴选项"><Caret w={10} h={5} /></Tool>
            <Tool type="button" aria-label="等轴测草图"><Glyph><path d="M2 2l6 7M12 12l6 6" stroke="#d4484c" /><path d="M10 1v6M10 13v6" stroke="#3cab5b" /><path d="M8 8h4v4H8z" stroke="#777" /></Glyph></Tool>
            <Tool type="button" $w={20} aria-label="等轴测选项"><Caret w={10} h={5} /></Tool>
          </Group>
          <Group $joined>
            <Tool type="button" $on aria-label="对象捕捉追踪"><Glyph><path d="M18 2L1 18h19" stroke="#555" /><path d="M6 9h4v4H6z" fill="#444" stroke="none" /></Glyph></Tool>
            <Tool type="button" $on aria-label="对象捕捉"><Glyph><path d="M6 3.500h13v15H3V8M.6 .800h5v5h-5z" stroke="#555" /></Glyph></Tool>
            <Tool type="button" $w={20} aria-label="对象捕捉选项"><Caret w={10} h={5} /></Tool>
          </Group>
          <Group>
            <Tool type="button" $on aria-label="注释可见性"><Glyph><path d="M8 1l4 11 4 7-6-3-1 4H8l-2-4-5 3 4-7z" fill="#444" stroke="none" /><circle cx="16" cy="5" r="3" stroke="#666" /></Glyph></Tool>
            <Tool type="button" aria-label="自动缩放"><Glyph><path d="M8 2l3 10 5 7-6-3-1 3H8l-2-3-5 3 4-7z" fill="#666" stroke="none" /><path d="M16 1l-3 5h2l-1 5 5-6h-2l1-4z" fill="#666" stroke="none" /></Glyph></Tool>
            <Tool type="button" aria-label="注释比例"><Glyph><path d="M10 1l3 11 5 7-6-3-1 3H9l-1-3-6 3 5-7z" fill="#666" stroke="none" /></Glyph></Tool>
            <Tool type="button" $w={42}>1:1 <Caret w={10} h={5} /></Tool>
          </Group>
          <Group>
            <Tool type="button" aria-label="切换工作空间"><Glyph><circle cx="10" cy="10" r="5" strokeWidth="4" stroke="#666" /><circle cx="10" cy="10" r="8.200" strokeWidth="3" strokeDasharray="3.440 3" stroke="#666" /></Glyph></Tool>
            <Tool type="button" $w={20} aria-label="工作空间选项"><Caret w={10} h={5} /></Tool>
          </Group>
          <Group $joined><Tool type="button" aria-label="注释监视器"><PlusMark s={19} w={1.4} c="#555" /></Tool></Group>
          <Group><Tool type="button" aria-label="隔离对象"><Glyph><path d="M1 1h7v7H1zM9 11.500l4.500 8h-9z" stroke="#777" /><circle cx="15.500" cy="9" r="4" stroke="#777" /></Glyph></Tool></Group>
          <Group>
            <Tool type="button" $w={35} aria-label="图形性能">
              <svg width="26" height="26" viewBox="0 0 26 26"><path d="M1 1h16l5 6v10H1z" fill="#2f65a3" /><path d="M1 14q6-3 11 3l3 6H1z" fill="#f5b82e" /><path d="M7 1v10M2 6h10M4 3l6 6M10 3L4 9" stroke="#dcebf8" strokeWidth="1" /><path d="M18 12l8 13H11z" fill="#f3b71b" stroke="#d79a10" strokeWidth=".7" /><path d="M18.300 16v4.500M18.300 22v1.500" stroke="#333" strokeWidth="1.600" /></svg>
            </Tool>
          </Group>
          <Group>
            <Tool type="button" aria-label="全屏显示"><Glyph><path d="M.6 3.500h18.800v13H.6z" fill="#f8f8f8" /><path d="M12 9l4-3.500M13 5.500h3.500V9M8 11l-4 3.500M3.500 11v3.500H7" stroke="#555" /></Glyph></Tool>
            <Tool type="button" aria-label="自定义"><Glyph><path d="M0 2.500h20M0 10h20M0 17.500h20" stroke="#555" strokeWidth="2" /></Glyph></Tool>
          </Group>
        </StatusTools>
      </StatusBar>
    </Frame>
  );
}
